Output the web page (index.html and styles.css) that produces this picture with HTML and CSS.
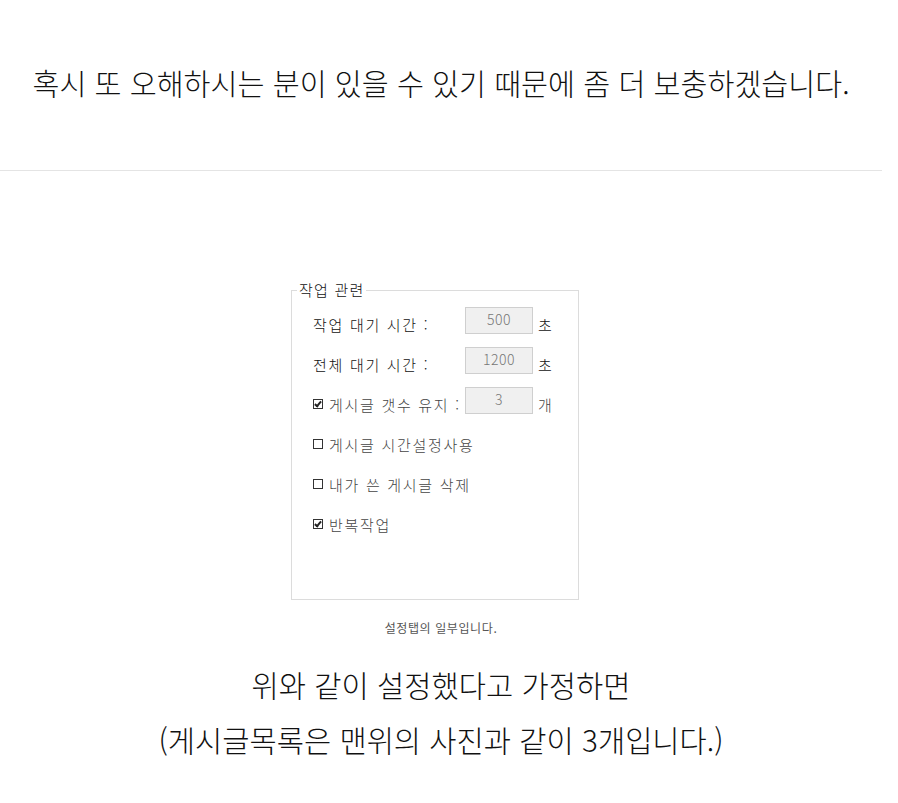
FILE: index.html
```html
<!DOCTYPE html>
<html lang="ko">
<head>
    <meta charset="UTF-8">
    <meta name="viewport" content="width=device-width, initial-scale=1.0">
    <title>작업 관련 설정</title>
    <link rel="stylesheet" href="styles.css">
</head>
<body>
    <div class="post">
        <p class="lead">혹시 또 오해하시는 분이 있을 수 있기 때문에 좀 더 보충하겠습니다.</p>

        <hr class="divider">

        <!-- Settings tab capture -->
        <div class="figure">
            <div class="shot">
                <fieldset class="group">
                    <legend>작업 관련</legend>

                    <div class="row">
                        <span class="label">작업 대기 시간 :</span>
                        <span class="field">500</span>
                        <span class="unit">초</span>
                    </div>

                    <div class="row">
                        <span class="label">전체 대기 시간 :</span>
                        <span class="field">1200</span>
                        <span class="unit">초</span>
                    </div>

                    <div class="row">
                        <span class="label soft"><span class="box checked"></span>게시글 갯수 유지 :</span>
                        <span class="field">3</span>
                        <span class="unit soft">개</span>
                    </div>

                    <div class="row">
                        <span class="label soft wide"><span class="box"></span>게시글 시간설정사용</span>
                    </div>

                    <div class="row">
                        <span class="label soft wide"><span class="box"></span>내가 쓴 게시글 삭제</span>
                    </div>

                    <div class="row">
                        <span class="label soft wide"><span class="box checked"></span>반복작업</span>
                    </div>
                </fieldset>
            </div>
            <p class="caption">설정탭의 일부입니다.</p>
        </div>

        <p class="body-text">위와 같이 설정했다고 가정하면<br>(게시글목록은 맨위의 사진과 같이 3개입니다.)</p>
    </div>
</body>
</html>
```

FILE: styles.css
```css
/* General Styles */

body {
    margin: 0;
    background-color: #fff;
    color: #111;
    font-family: "Noto Sans CJK KR", "Noto Sans", sans-serif;
}

.post {
    width: 882px;
}

.lead {
    margin: 62px 0 0;
    text-align: center;
    font-size: 29.3px;
    line-height: 40px;
    font-weight: 300;
}

.divider {
    margin: 68px 0 0;
    border: 0;
    border-top: 1px solid #e4e4e4;
}

/* Captured dialog */
.figure {
    margin-top: 111px;
    text-align: center;
}

.shot {
    width: 300px;
    margin: 0 auto;
    text-align: left;
    background: #fff;
}

.group {
    width: 288px;
    box-sizing: border-box;
    margin: 0;
    padding: 2px 0 59px 21px;
    border: 1px solid #dcdcdc;
    font-size: 15px;
    font-weight: 300;
    letter-spacing: 1.7px;
    color: #111;
}

.group legend {
    margin-left: -16px;
    padding: 0 2px;
    line-height: 16px;
    font-size: 15px;
    letter-spacing: 1.2px;
}

.row {
    display: flex;
    align-items: center;
    height: 40px;
}

.label {
    display: flex;
    align-items: center;
    width: 152px;
    padding-top: 8px;
    white-space: nowrap;
}

.label.wide {
    width: auto;
}

.soft {
    color: #444;
}

.box {
    display: inline-block;
    width: 8px;
    height: 8px;
    margin-right: 6px;
    border: 1px solid #333;
    position: relative;
}

.box.checked::after {
    content: "";
    position: absolute;
    left: 2px;
    top: 0;
    width: 2px;
    height: 5px;
    border: solid #222;
    border-width: 0 2px 2px 0;
    transform: rotate(40deg);
}

.field {
    width: 66px;
    height: 25px;
    box-sizing: content-box;
    border: 1px solid #cfcfcf;
    background: #f0f0f0;
    color: #777;
    text-align: center;
    font-size: 14px;
    letter-spacing: 0.5px;
    line-height: 22px;
}

.unit {
    margin-left: 5px;
    padding-top: 8px;
}

.caption {
    margin: 18px 0 0;
    font-size: 12px;
    letter-spacing: 0.6px;
    line-height: 20px;
    color: #555;
}

.body-text {
    margin: 19px 0 0;
    text-align: center;
    font-size: 29.6px;
    line-height: 55px;
    font-weight: 300;
}
```
